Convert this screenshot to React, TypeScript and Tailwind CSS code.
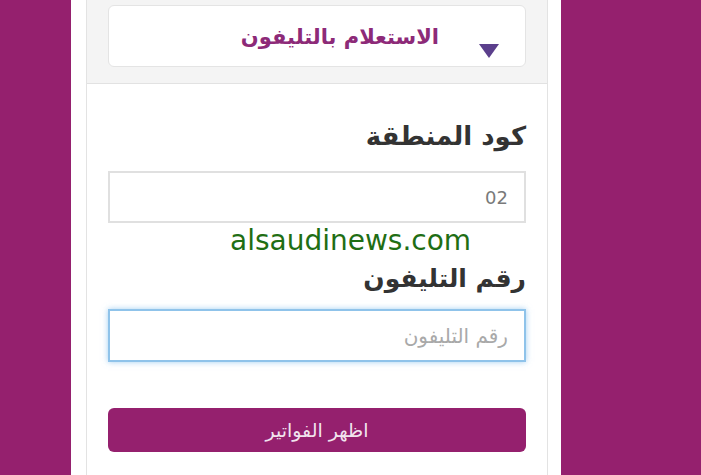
export default function App() {
  return (
    <div className="w-[701px] h-[475px] overflow-hidden bg-[#95206e] pl-[71px]">
      <div className="w-[490px] h-full bg-white pl-[15px] pr-[13px]">
        <div
          dir="rtl"
          className="h-full border-x border-[#e3e3e3] bg-white"
          style={{ fontFamily: '"DejaVu Sans", sans-serif' }}
        >
          {/* Header */}
          <div className="h-[84px] bg-[#f4f4f4] border-b border-[#e2e2e2] px-[21px] pt-[5px]">
            <div className="h-[62px] rounded-md border border-[#e4e4e4] bg-white flex items-center gap-[40px] pr-[26px]">
              <svg width="20" height="14" viewBox="0 0 20 14" className="mt-[30px] shrink-0">
                <polygon points="0,0 20,0 10,14" fill="#5b3f8c" />
              </svg>
              <span className="text-[21px] font-bold text-[#8d2a78] leading-none mt-[2px]">
                الاستعلام بالتليفون
              </span>
            </div>
          </div>

          {/* Body */}
          <div className="px-[21px] pt-[32px]">
            <div className="text-[26px] font-bold text-[#333333] leading-[40px]">كود المنطقة</div>
            <div className="mt-[15px] h-[52px] border-2 border-[#e0e0e0] bg-white flex items-center pr-[16px] text-[18px] text-[#7a7a7a]">
              02
            </div>
            <div
              dir="ltr"
              className="h-[36px] flex items-center pl-[122px] text-[28px] text-[#1f6e14] leading-none"
              style={{ fontFamily: '"DejaVu Sans", sans-serif' }}
            >
              alsaudinews.com
            </div>
            <div className="text-[25px] font-bold text-[#333333] leading-[40px]">رقم التليفون</div>
            <div className="mt-[10px] h-[53px] border-2 border-[#8fc3ea] shadow-[0_0_6px_rgba(102,175,233,0.6)] bg-white flex items-center pr-[16px] text-[20px] text-[#a9a9a9]">
              رقم التليفون
            </div>
            <button className="mt-[46px] w-full h-[44px] rounded-md bg-[#95206e] text-[19px] text-[#f1e4ee] flex items-center justify-center">
              اظهر الفواتير
            </button>
          </div>
        </div>
      </div>
    </div>
  )
}
